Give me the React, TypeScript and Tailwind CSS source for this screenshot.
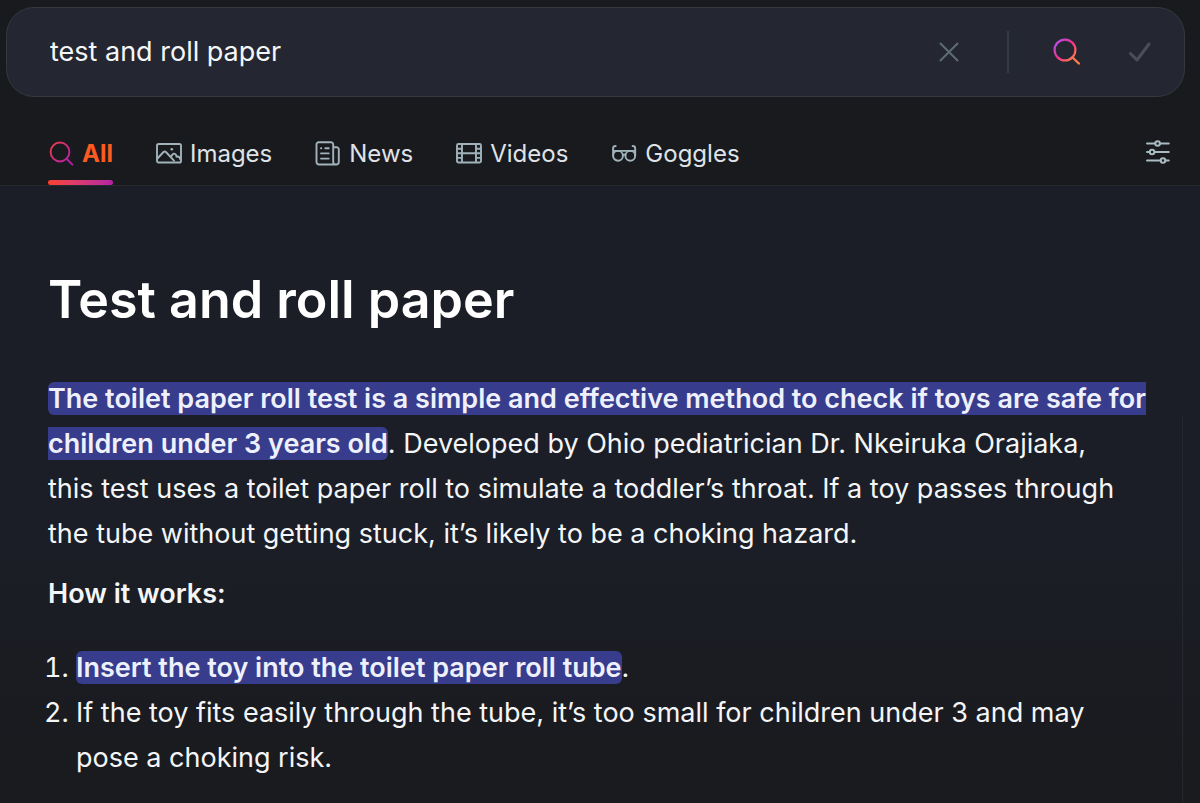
import type { ReactNode } from "react";

function GradientSearchIcon() {
  return (
    <svg width="28" height="28" viewBox="0 0 28 28" fill="none" aria-hidden="true">
      <defs>
        <linearGradient id="bar-search" x1="3" y1="3" x2="25" y2="25" gradientUnits="userSpaceOnUse">
          <stop stopColor="#b84de8" />
          <stop offset="0.4" stopColor="#f0308f" />
          <stop offset="0.8" stopColor="#ff7a4c" />
        </linearGradient>
      </defs>
      <g stroke="url(#bar-search)" strokeWidth="2.2" strokeLinecap="round">
        <circle cx="12" cy="12" r="10.4" />
        <path d="M19.3 19.3 26 25.6" />
      </g>
    </svg>
  );
}

function TabSearchIcon() {
  return (
    <svg width="26" height="26" viewBox="0 0 26 26" fill="none" aria-hidden="true">
      <defs>
        <linearGradient id="tab-search" x1="3" y1="3" x2="22" y2="20" gradientUnits="userSpaceOnUse">
          <stop stopColor="#e83a4c" />
          <stop offset="1" stopColor="#b01fa5" />
        </linearGradient>
      </defs>
      <g stroke="url(#tab-search)" strokeWidth="2" strokeLinecap="round">
        <circle cx="12" cy="11" r="9.4" />
        <path d="M18.6 17.8 24.4 23.6" />
      </g>
    </svg>
  );
}

function ImagesIcon() {
  return (
    <svg width="26" height="26" viewBox="0 0 26 26" fill="none" stroke="currentColor" strokeWidth="1.9" strokeLinecap="round" strokeLinejoin="round" aria-hidden="true">
      <rect x="1" y="3" width="24" height="18.5" rx="1.6" />
      <path d="M1.4 17.500 7.500 11q1.200-1.200 2.400 0L18 19.600M15 15.600l1.600-2.200q1.300-1.500 3 0 .8.700.9 2.300 2.800-.8 3.800 2.600" />
      <circle cx="15.800" cy="8.300" r="1.300" fill="currentColor" stroke="none" />
    </svg>
  );
}

function NewsIcon() {
  return (
    <svg width="26" height="26" viewBox="0 0 26 26" fill="none" stroke="currentColor" strokeWidth="1.9" strokeLinecap="round" strokeLinejoin="round" aria-hidden="true">
      <path d="M21 23.500H4a2.500 2.500 0 0 1-2.500-2.500V3.500a2.200 2.200 0 0 1 2.200-2.200H16a2.200 2.200 0 0 1 2.200 2.200V20.700a2.800 2.800 0 0 0 5.600 0V8.400a2.200 2.200 0 0 0-2.200-2.200H18.200" />
      <path d="M6 7.200h.3M10.300 7.200h3.400M6 12.400h7.700M6 17.600h7.700" />
    </svg>
  );
}

function VideosIcon() {
  return (
    <svg width="26" height="26" viewBox="0 0 26 26" fill="none" stroke="currentColor" strokeWidth="1.900" strokeLinejoin="round" aria-hidden="true">
      <rect x="1" y="3" width="24" height="18.500" rx="1.500" />
      <path d="M6 3v18.500M20 3v18.500M6 12.300h14M1 7.700h5M1 12.300h5M1 16.900h5M20 7.700h5M20 12.300h5M20 16.900h5" />
    </svg>
  );
}

function GogglesIcon() {
  return (
    <svg width="26" height="26" viewBox="0 0 26 26" fill="none" stroke="currentColor" strokeWidth="1.900" strokeLinecap="round" aria-hidden="true">
      <circle cx="7" cy="14.800" r="4.900" />
      <circle cx="19.300" cy="14.800" r="4.900" />
      <path d="M2.100 14.800V7.400Q2.100 5 4.700 5M24.200 14.800V7.400Q24.200 5 21.600 5M2.100 9.900h22.100M11.900 14q1.300-1.200 2.600 0" />
    </svg>
  );
}

function SlidersIcon() {
  return (
    <svg width="26" height="26" viewBox="0 0 26 26" fill="none" stroke="currentColor" strokeWidth="2" strokeLinecap="round" aria-hidden="true">
      <path d="M2 4.500h8.200M15 4.500h8.800M2 13h2.700M9.500 13h14.300M2 21.500h13.600M20.400 21.500h3.400" />
      <circle cx="12.600" cy="4.500" r="2.300" />
      <circle cx="7.100" cy="13" r="2.300" />
      <circle cx="18" cy="21.500" r="2.300" />
    </svg>
  );
}

function SearchBar() {
  return (
    <form role="search" onSubmit={(e) => e.preventDefault()} className="ml-1.5 mr-[15px] mt-[7px] flex h-[90px] items-center rounded-[28px] border border-[#34393f] bg-[#242731] pl-[43px] pr-[31px]">
      <input
        type="text"
        aria-label="Search"
        defaultValue="test and roll paper"
        className="min-w-0 flex-1 bg-transparent text-[27px] text-[#f5f6f8] outline-none"
      />
      <button type="reset" aria-label="Clear" className="text-[#5d6b75]">
        <svg width="24" height="24" viewBox="0 0 24 24" fill="none" stroke="currentColor" strokeWidth="2" strokeLinecap="round" aria-hidden="true">
          <path d="m3.500 3.500 17 17M20.500 3.500l-17 17" />
        </svg>
      </button>
      <span className="ml-[46px] h-[42px] w-0.5 bg-[#343b44]" />
      <button type="submit" aria-label="Submit search" className="ml-11">
        <GradientSearchIcon />
      </button>
      <button type="button" aria-label="Confirm" className="ml-[46px] text-[#4b4e58]">
        <svg width="26" height="26" viewBox="0 0 26 26" fill="none" stroke="currentColor" strokeWidth="3" strokeLinecap="round" strokeLinejoin="round" aria-hidden="true">
          <path d="M3.500 14.500 10 21 22 5" />
        </svg>
      </button>
    </form>
  );
}

function Tab({ icon, label }: { icon: ReactNode; label: string }) {
  return (
    <a href="#" className="flex items-center gap-2 text-[#dfe3e8]">
      <span className="text-[#a1b2ba]">{icon}</span>
      {label}
    </a>
  );
}

function Tabs() {
  return (
    <nav className="flex h-[89px] items-stretch border-b border-[#26292e] pl-12 pr-[29px] pt-[30px] text-2xl leading-none">
      <div className="flex flex-1 items-stretch gap-[43px]">
        <a href="#" aria-current="page" className="flex flex-col justify-between font-bold text-[#ff5a1f]">
          <span className="flex flex-1 items-center gap-2">
            <TabSearchIcon />
            All
          </span>
          <span className="h-[5px] rounded-full bg-linear-to-r from-[#fb4028] to-[#b620a2]" />
        </a>
        <div className="flex items-center gap-[43px] pb-[5px]">
          <Tab icon={<ImagesIcon />} label="Images" />
          <Tab icon={<NewsIcon />} label="News" />
          <Tab icon={<VideosIcon />} label="Videos" />
          <Tab icon={<GogglesIcon />} label="Goggles" />
        </div>
      </div>
      <button type="button" aria-label="Filters" className="pb-2 text-[#a9bac3]">
        <SlidersIcon />
      </button>
    </nav>
  );
}

function Mark({ children }: { children: ReactNode }) {
  return <mark className="rounded-md bg-[#373c8c] font-semibold text-[#eef0fb]">{children}</mark>;
}

export default function App() {
  return (
    <div className="flex min-h-screen flex-col bg-[#191a1e] font-['Inter',sans-serif] text-white">
      <SearchBar />
      <Tabs />
      <main className="flex flex-1 bg-linear-to-b from-[#1b1e26] from-60% to-[#1a1b1f] to-90%">
        <article className="flex-1 pb-5 pl-12 pr-8 pt-[84px] text-[27px] leading-[45px] text-[#f4f5f7]">
          <h1 className="text-[52px] font-semibold leading-[60px] text-white">Test and roll paper</h1>
          <p className="mt-[46px]">
            <Mark>The toilet paper roll test is a simple and effective method to check if toys are safe for children under 3 years old</Mark>
            . Developed by Ohio pediatrician Dr. Nkeiruka Orajiaka,
            <br />
            this test uses a toilet paper roll to simulate a toddler’s throat. If a toy passes through the tube without getting stuck, it’s likely to be a choking hazard.
          </p>
          <p className="mt-[15px] font-semibold">How it works:</p>
          <ol className="mt-[29px] list-decimal pl-7">
            <li>
              <Mark>Insert the toy into the toilet paper roll tube</Mark>.
            </li>
            <li>If the toy fits easily through the tube, it’s too small for children under 3 and may pose a choking risk.</li>
          </ol>
        </article>
        <aside className="mt-[231px] w-[18px] border-l border-[#25282f]" />
      </main>
    </div>
  );
}
